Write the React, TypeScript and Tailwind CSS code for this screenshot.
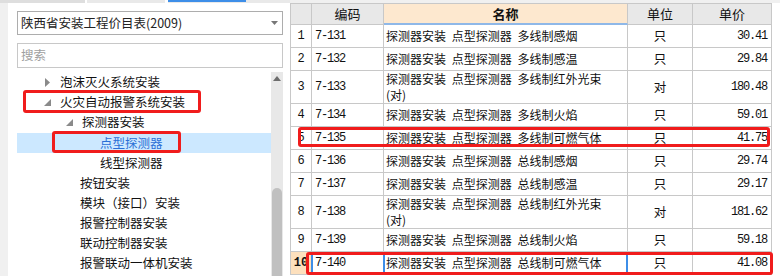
import React from 'react'

type Row = {
  n: number
  code: string
  name: string[]
  unit: string
  price: string
}

const rows: Row[] = [
  { n: 1, code: '7-131', name: ['探测器安装 点型探测器 多线制感烟'], unit: '只', price: '30.41' },
  { n: 2, code: '7-132', name: ['探测器安装 点型探测器 多线制感温'], unit: '只', price: '29.84' },
  { n: 3, code: '7-133', name: ['探测器安装 点型探测器 多线制红外光束', '(对)'], unit: '对', price: '180.48' },
  { n: 4, code: '7-134', name: ['探测器安装 点型探测器 多线制火焰'], unit: '只', price: '59.01' },
  { n: 5, code: '7-135', name: ['探测器安装 点型探测器 多线制可燃气体'], unit: '只', price: '41.75' },
  { n: 6, code: '7-136', name: ['探测器安装 点型探测器 总线制感烟'], unit: '只', price: '29.74' },
  { n: 7, code: '7-137', name: ['探测器安装 点型探测器 总线制感温'], unit: '只', price: '29.17' },
  { n: 8, code: '7-138', name: ['探测器安装 点型探测器 总线制红外光束', '(对)'], unit: '对', price: '181.62' },
  { n: 9, code: '7-139', name: ['探测器安装 点型探测器 总线制火焰'], unit: '只', price: '59.18' },
  { n: 10, code: '7-140', name: ['探测器安装 点型探测器 总线制可燃气体'], unit: '只', price: '41.08' },
]

const cjk = { fontFamily: '"Noto Sans CJK SC", "Noto Sans", sans-serif' }
const mono = { fontFamily: '"Liberation Mono", "Noto Sans CJK SC", monospace' }

function Collapsed() {
  return (
    <svg width="6" height="9" viewBox="0 0 6 9" className="shrink-0">
      <path d="M0 0 L5 4.5 L0 9 Z" fill="#8a8a8a" />
    </svg>
  )
}

function Expanded() {
  return (
    <svg width="7" height="7" viewBox="0 0 7 7" className="shrink-0">
      <path d="M7 0 L7 7 L0 7 Z" fill="#8a8a8a" />
    </svg>
  )
}

function TreePanel() {
  const items: { label: string; indent: string; icon?: 'c' | 'e'; selected?: boolean; boxed?: boolean }[] = [
    { label: '泡沫灭火系统安装', indent: 'pl-[28px]', icon: 'c' },
    { label: '火灾自动报警系统安装', indent: 'pl-[27px]', icon: 'e', boxed: true },
    { label: '探测器安装', indent: 'pl-[49px]', icon: 'e' },
    { label: '点型探测器', indent: 'pl-[83px]', selected: true },
    { label: '线型探测器', indent: 'pl-[83px]' },
    { label: '按钮安装', indent: 'pl-[63px]' },
    { label: '模块（接口）安装', indent: 'pl-[63px]' },
    { label: '报警控制器安装', indent: 'pl-[63px]' },
    { label: '联动控制器安装', indent: 'pl-[63px]' },
    { label: '报警联动一体机安装', indent: 'pl-[63px]' },
  ]

  return (
    <div className="w-[290px] shrink-0 flex bg-white" style={cjk}>
      <div className="w-[8px] bg-[#f0f0f0]" />
      <div className="flex-1 flex flex-col pl-[9px] pr-[7px] pt-[11px]">
        {/* 价目表选择 */}
        <div className="h-[24px] border border-[#adadad] flex items-center justify-between pl-[3px] pr-[4px] text-[12.5px] text-[#222]">
          <span>陕西省安装工程价目表(2009)</span>
          <svg width="7" height="4" viewBox="0 0 7 4">
            <path d="M0 0 L7 0 L3.5 4 Z" fill="#777" />
          </svg>
        </div>
        <div className="h-[25px] mt-[8px] border border-[#c8c8c8] flex items-center pl-[3px] text-[12.5px] text-[#a0a0a0]">
          搜索
        </div>
        <div className="flex-1 flex mt-[4px]">
          <div className="flex-1 flex flex-col">
            {items.map((it, i) => (
              <div
                key={i}
                className={`relative h-[20px] flex items-center gap-[9px] text-[12.5px] ${it.indent} ${
                  it.selected ? 'bg-[#cce8ff] text-[#2a6fd6] h-[19px] mt-[1px]' : 'text-[#111]'
                }`}
              >
                {it.icon === 'c' && <Collapsed />}
                {it.icon === 'e' && <Expanded />}
                <span>{it.label}</span>
                {it.boxed && (
                  <div className="absolute left-[6px] top-[-2px] w-[178px] h-[23px] border-[3px] border-[#f01c1c] rounded-[3px]" />
                )}
                {it.selected && (
                  <div className="absolute left-[35px] top-[-2px] w-[129px] h-[22px] border-[3px] border-[#f01c1c] rounded-[3px]" />
                )}
              </div>
            ))}
          </div>
          {/* 滚动条 */}
          <div className="w-[12px] bg-[#e8e8e8] flex flex-col items-center">
            <svg width="8" height="5" viewBox="0 0 8 5" className="mt-[4px]">
              <path d="M0 5 L4 0 L8 5 Z" fill="#6d6d6d" />
            </svg>
            <div className="flex-1" />
            <div className="w-[10px] h-[88px] bg-[#c0c0c0] rounded-t-[5px]" />
          </div>
        </div>
      </div>
    </div>
  )
}

function Table() {
  return (
    <div className="flex-1 flex flex-col bg-white text-[12px] text-[#111]" style={cjk}>
      <div className="h-[3px] bg-[#f0f0f0]" />
      {/* 表头 */}
      <div className="flex h-[22px] border-l border-[#c8c8c8]">
        <div className="w-[21px] bg-[#e8e8e8] border-r border-b border-t border-[#c8c8c8]" />
        <div className="w-[72px] bg-[#e8e8e8] border-r border-b border-t border-[#c8c8c8] flex items-center justify-center text-[13px]">编码</div>
        <div className="w-[244px] bg-[#fde8cf] border-r border-b-2 border-t border-[#c8c8c8] border-b-[#8fb8e8] flex items-center justify-center font-bold text-[13px]">名称</div>
        <div className="w-[65px] bg-[#e8e8e8] border-r border-b border-t border-[#c8c8c8] flex items-center justify-center text-[13px]">单位</div>
        <div className="w-[79px] bg-[#e8e8e8] border-r border-b border-t border-[#c8c8c8] flex items-center justify-center text-[13px]">单价</div>
      </div>
      {rows.map((r) => {
        const tall = r.name.length > 1
        const last = r.n === 10
        return (
          <div key={r.n} className={`relative flex border-l border-[#c8c8c8] ${tall ? 'h-[33px]' : 'h-[23px]'}`}>
            <div
              className={`w-[21px] border-r border-b border-[#c8c8c8] flex items-center justify-center text-[12px] ${
                last ? 'bg-[#fde0bd] font-bold' : 'bg-white'
              }`}
              style={mono}
            >
              {r.n}
            </div>
            <div
              className="w-[72px] border-r border-b border-[#c8c8c8] flex items-center pl-[3px] text-[12px] tracking-[-1.2px]"
              style={mono}
            >
              {r.code}
            </div>
            <div
              className={`w-[244px] border-r border-b border-[#c8c8c8] flex flex-col pl-[2px] text-[12px] [word-spacing:3px] ${
                tall ? 'justify-start' : 'justify-center'
              }`}
            >
              {r.name.map((l, i) => (
                <span key={i} className="block h-[16px] leading-[16px] whitespace-nowrap">{l}</span>
              ))}
            </div>
            <div className="w-[65px] border-r border-b border-[#c8c8c8] flex items-center justify-center text-[12.5px]">
              {r.unit}
            </div>
            <div
              className="w-[79px] border-r border-b border-[#c8c8c8] flex items-center justify-end pr-[4px] text-[12px] tracking-[-1.2px]"
              style={mono}
            >
              {r.price}
            </div>
            {last && (
              <>
                <div className="absolute left-[20px] top-0 bottom-0 w-[2px] bg-[#3d8ee8]" />
                <div className="absolute left-[92px] top-0 bottom-0 w-[2px] bg-[#3d8ee8]" />
                <div className="absolute left-[335px] top-0 bottom-0 w-[2px] bg-[#3d8ee8]" />
              </>
            )}
            {r.n === 5 && (
              <div className="absolute left-[7px] top-0 w-[472px] h-[20px] border-[3px] border-[#f01c1c] rounded-[3px]" />
            )}
            {last && (
              <div className="absolute left-[15px] top-0 w-[467px] h-[23px] border-[3px] border-[#f01c1c] rounded-[3px]" />
            )}
          </div>
        )
      })}
    </div>
  )
}

export default function App() {
  return (
    <div className="w-[780px] h-[276px] overflow-hidden flex flex-col bg-white">
      <div className="relative flex flex-1 overflow-hidden">
        <div className="absolute left-0 top-0 w-[290px] h-[3px] flex z-10">
          <div className="w-[85px] bg-[#dedede]" />
          <div className="w-[2px] bg-white" />
          <div className="w-[78px] bg-[#e9e9e9]" />
          <div className="w-[3px] bg-white" />
          <div className="w-[78px] bg-[#e9e9e9] border-t-2 border-[#3d8ee8]" />
          <div className="flex-1 bg-[#e9e9e9]" />
        </div>
        <TreePanel />
        <Table />
      </div>
    </div>
  )
}
